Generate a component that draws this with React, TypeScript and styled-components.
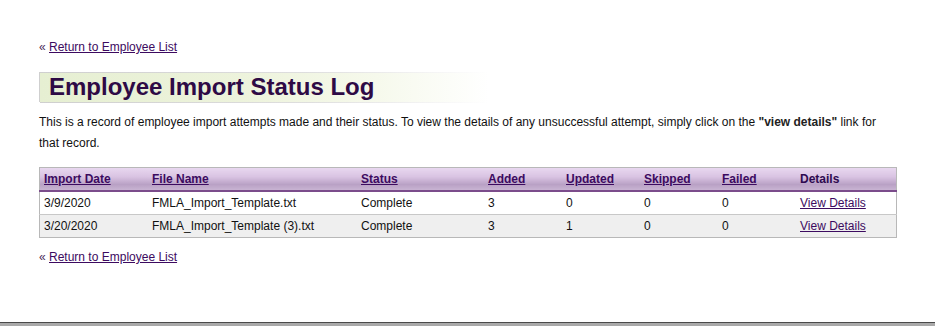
import React from "react";
import styled, { createGlobalStyle } from "styled-components";

const Global = createGlobalStyle`
html, body {
  margin: 0;
  padding: 0;
  background: #fff;
}
body {
  font-family: "Liberation Sans", Arial, sans-serif;
  font-size: 12px;
  color: #111;
}
`;

const Page = styled.div`
display: flex;
flex-direction: column;
min-height: 100vh;
box-sizing: border-box;
`;

const Content = styled.div`
padding: 40px 39px 0 39px;
`;

const BackLine = styled.div`
font-size: 12px;
line-height: 14px;
color: #4a2a5a;
a {
  color: #3c0a60;
  text-decoration: underline;
}
`;

const Heading = styled.h1`
margin: 18px 0 0 0;
height: 30px;
width: 450px;
box-sizing: border-box;
padding: 0 0 0 9px;
font-size: 24px;
line-height: 30px;
font-weight: bold;
color: #2e0a45;
border-left: 1px solid #cfcfcf;
background: linear-gradient(to right, #e6efd2 0%, #edf3dc 45%, #f6f9ec 75%, #ffffff 100%);
position: relative;
&::before,
&::after {
  content: "";
  position: absolute;
  left: 0;
  right: 0;
  height: 1px;
  background: linear-gradient(to right, #cfcfcf 0%, #dedede 60%, #ffffff 100%);
}
&::before {
  top: 0;
}
&::after {
  bottom: -1px;
}
`;

const Intro = styled.p`
margin: 10px 0 0 0;
font-size: 12px;
line-height: 21px;
color: #111;
b {
  color: #222;
}
`;

const Table = styled.table`
margin-top: 13px;
width: 858px;
border-collapse: collapse;
border: 1px solid #b8b8b8;
table-layout: fixed;
`;

const HeadRow = styled.tr`
background: linear-gradient(to bottom, #e8d7ef 0%, #d9c3e2 40%, #b9a1c5 75%, #c8b3d2 100%);
border-bottom: 2px solid #7b4c8b;
`;

const Th = styled.th<{ $w?: number }>`
${(p) => (p.$w ? `width: ${p.$w - 4}px;` : "")}
height: 22px;
padding: 0 0 0 4px;
text-align: left;
font-size: 12px;
font-weight: bold;
color: #2e0a50;
a {
  color: #3c0a60;
  text-decoration: underline;
}
`;

const Row = styled.tr<{ $alt?: boolean }>`
background: ${(p) => (p.$alt ? "#efefef" : "#ffffff")};
border-top: 1px solid #c8c8c8;
`;

const Td = styled.td`
height: 22px;
padding: 0 0 0 4px;
font-size: 12px;
color: #111;
a {
  color: #3c0a60;
  text-decoration: underline;
}
`;

const Spacer = styled.div`
height: 12px;
`;

const Footer = styled.div`
margin-top: auto;
height: 3px;
border-top: 1px solid #4a4a4a;
background: #a9a9a9;
`;

const columns: { label: string; w?: number; link: boolean }[] = [
  { label: "Import Date", w: 108, link: true },
  { label: "File Name", w: 209, link: true },
  { label: "Status", w: 127, link: true },
  { label: "Added", w: 78, link: true },
  { label: "Updated", w: 78, link: true },
  { label: "Skipped", w: 78, link: true },
  { label: "Failed", w: 78, link: true },
  { label: "Details", link: false },
];

const rows = [
  { date: "3/9/2020", file: "FMLA_Import_Template.txt", status: "Complete", added: 3, updated: 0, skipped: 0, failed: 0 },
  { date: "3/20/2020", file: "FMLA_Import_Template (3).txt", status: "Complete", added: 3, updated: 1, skipped: 0, failed: 0 },
];

const Back = () => (
  <BackLine>
    « <a href="#">Return to Employee List</a>
  </BackLine>
);

export default function App() {
  return (
    <Page>
      <Global />
      <Content>
        <Back />
        <Heading>Employee Import Status Log</Heading>
        <Intro>
          This is a record of employee import attempts made and their status. To view the details of any unsuccessful
          attempt, simply click on the <b>"view details"</b> link for that record.
        </Intro>
        <Table>
          <thead>
            <HeadRow>
              {columns.map((c) => (
                <Th key={c.label} $w={c.w}>
                  {c.link ? <a href="#">{c.label}</a> : c.label}
                </Th>
              ))}
            </HeadRow>
          </thead>
          <tbody>
            {rows.map((r, i) => (
              <Row key={r.date} $alt={i % 2 === 1}>
                <Td>{r.date}</Td>
                <Td>{r.file}</Td>
                <Td>{r.status}</Td>
                <Td>{r.added}</Td>
                <Td>{r.updated}</Td>
                <Td>{r.skipped}</Td>
                <Td>{r.failed}</Td>
                <Td>
                  <a href="#">View Details</a>
                </Td>
              </Row>
            ))}
          </tbody>
        </Table>
        <Spacer />
        <Back />
      </Content>
      <Footer />
    </Page>
  );
}
